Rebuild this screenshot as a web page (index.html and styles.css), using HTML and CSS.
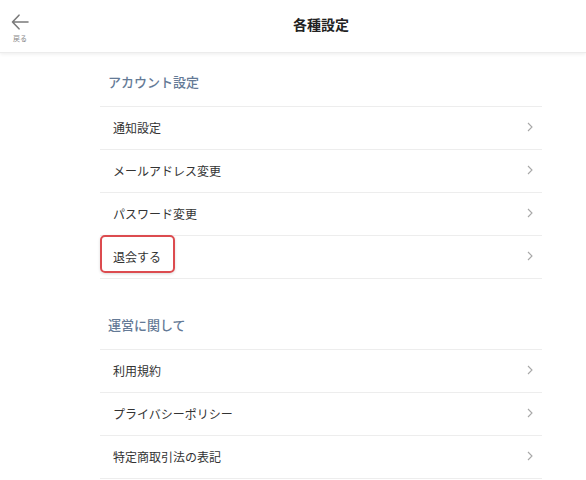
FILE: index.html
```html
<!DOCTYPE html>
<html lang="ja">
<head>
<meta charset="utf-8">
<link rel="stylesheet" href="styles.css">
</head>
<body>
<div class="frame">
  <header class="header">
    <a class="back">
      <svg class="back-icon" width="18" height="16" viewBox="0 0 18 16"><path d="M1.5 8 H17 M8 1.2 L1.5 8 L8 14.8" fill="none" stroke="#7a7a7a" stroke-width="1.6" stroke-linecap="round" stroke-linejoin="round"/></svg>
      <span class="back-label">戻る</span>
    </a>
    <h1 class="title">各種設定</h1>
  </header>
  <main class="content">
    <section class="section">
      <h2 class="section-title">アカウント設定</h2>
      <ul class="list">
        <li class="row"><span>通知設定</span><svg class="chev" width="6" height="10" viewBox="0 0 6 10"><path d="M1 1 L5 5 L1 9" fill="none" stroke="#a8a8a8" stroke-width="1.1"/></svg></li>
        <li class="row"><span>メールアドレス変更</span><svg class="chev" width="6" height="10" viewBox="0 0 6 10"><path d="M1 1 L5 5 L1 9" fill="none" stroke="#a8a8a8" stroke-width="1.1"/></svg></li>
        <li class="row"><span>パスワード変更</span><svg class="chev" width="6" height="10" viewBox="0 0 6 10"><path d="M1 1 L5 5 L1 9" fill="none" stroke="#a8a8a8" stroke-width="1.1"/></svg></li>
        <li class="row"><span>退会する</span><span class="highlight"></span><svg class="chev" width="6" height="10" viewBox="0 0 6 10"><path d="M1 1 L5 5 L1 9" fill="none" stroke="#a8a8a8" stroke-width="1.1"/></svg></li>
      </ul>
    </section>
    <section class="section section-next">
      <h2 class="section-title">運営に関して</h2>
      <ul class="list">
        <li class="row"><span>利用規約</span><svg class="chev" width="6" height="10" viewBox="0 0 6 10"><path d="M1 1 L5 5 L1 9" fill="none" stroke="#a8a8a8" stroke-width="1.1"/></svg></li>
        <li class="row"><span>プライバシーポリシー</span><svg class="chev" width="6" height="10" viewBox="0 0 6 10"><path d="M1 1 L5 5 L1 9" fill="none" stroke="#a8a8a8" stroke-width="1.1"/></svg></li>
        <li class="row"><span>特定商取引法の表記</span><svg class="chev" width="6" height="10" viewBox="0 0 6 10"><path d="M1 1 L5 5 L1 9" fill="none" stroke="#a8a8a8" stroke-width="1.1"/></svg></li>
      </ul>
    </section>
  </main>
</div>
</body>
</html>
```
FILE: styles.css
```css
html, body {
  margin: 0;
  padding: 0;
  background: #fff;
  overflow: hidden;
}
body {
  font-family: "Noto Sans CJK JP", "Noto Sans", sans-serif;
  color: #333;
}
.frame {
  width: 100%;
}
.header {
  height: 53px;
  display: flex;
  align-items: center;
  position: relative;
  box-shadow: 0 1px 4px rgba(0,0,0,0.08);
  border-bottom: 1px solid #ececec;
  box-sizing: border-box;
}
.back {
  position: absolute;
  left: 10px;
  top: 14px;
  display: flex;
  flex-direction: column;
  align-items: center;
  width: 20px;
}
.back-icon {
  display: block;
}
.back-label {
  font-size: 7px;
  line-height: 9px;
  color: #888;
  margin-top: 4px;
}
.title {
  flex: 1;
  margin: -4px 0 0 0;
  text-align: center;
  font-size: 14px;
  font-weight: 700;
  color: #222;
  line-height: 20px;
  padding-left: 56px;
}
.content {
  width: 442px;
  margin-left: 100px;
}
.section {
  padding-top: 17px;
}
.section-next {
  margin-top: 17px;
}
.section-title {
  margin: 0 0 12px 8px;
  font-size: 13px;
  font-weight: 500;
  line-height: 24px;
  color: #647a96;
}
.list {
  list-style: none;
  margin: 0;
  padding: 0;
  border-bottom: 1px solid #ededed;
}
.row {
  position: relative;
  border-top: 1px solid #ededed;
  display: flex;
  align-items: center;
  justify-content: space-between;
  padding: 0 9px 2px 13px;
  box-sizing: border-box;
  height: 43px;
  font-size: 12px;
  color: #333;
}
.chev {
  display: block;
}
.highlight {
  position: absolute;
  left: 0;
  top: -1px;
  width: 75px;
  height: 38px;
  box-sizing: border-box;
  border: 2px solid #dc4b4f;
  border-radius: 5px;
  box-shadow: 0 1px 3px rgba(0,0,0,0.15);
}
```
